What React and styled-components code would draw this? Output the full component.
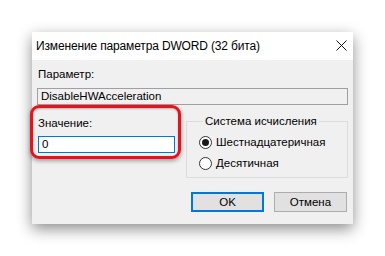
import React from 'react';
import styled, { createGlobalStyle } from 'styled-components';

const Global = createGlobalStyle`
	html, body {
		margin: 0;
		background: #fff;
	}
	body {
		font-family: "Liberation Sans", "Noto Sans", sans-serif;
		font-size: 11.5px;
		color: #000;
	}
`;

const Page = styled.div`
	padding: 32px 0 0 32px;
	height: 256px;
	box-sizing: border-box;
`;

const Dialog = styled.div`
	width: 321px;
	height: 192px;
	background: #f0f0f0;
	box-shadow: 0 5px 14px rgba(0, 0, 0, 0.45);
	display: flex;
	flex-direction: column;
`;

const TitleBar = styled.div`
	height: 28px;
	background: #fff;
	display: flex;
	align-items: center;
	justify-content: space-between;
	padding: 0 6px 0 4px;
	font-size: 12px;
	letter-spacing: -0.15px;
`;

const Close = styled.svg`
	width: 11px;
	height: 11px;
	margin-top: -2px;
`;

const Body = styled.div`
	padding: 7px 5px 0 5px;
	display: flex;
	flex-direction: column;
`;

const Label = styled.div`
	line-height: 15px;
	padding-left: ${p => p.indent || 0}px;
`;

const Field = styled.div`
	height: 17px;
	box-sizing: border-box;
	margin-top: ${p => p.gap || 6}px;
	border: 1px solid ${p => (p.focused ? '#0078d7' : '#a0a0a0')};
	background: ${p => (p.focused ? '#fff' : '#f0f0f0')};
	padding-left: 3px;
	line-height: 15px;
	width: ${p => (p.width ? `${p.width}px` : 'auto')};
`;

const Row = styled.div`
	display: flex;
	justify-content: space-between;
	align-items: flex-start;
	margin-top: 9px;
`;

const ValueBlock = styled.div`
	position: relative;
	padding-top: 2px;
	padding-left: 1px;

	&::after {
		content: '';
		position: absolute;
		left: -7px;
		top: -9px;
		width: 145px;
		height: 48px;
		border: 3px solid #e8121b;
		border-radius: 9px;
		box-shadow: 0 2px 4px rgba(0, 0, 0, 0.35), inset 0 1px 2px rgba(0, 0, 0, 0.25);
		pointer-events: none;
	}
`;

const Group = styled.fieldset`
	margin: 0;
	width: 162px;
	height: 64px;
	box-sizing: border-box;
	border: 1px solid #dcdcdc;
	padding: 5px 0 0 12px;
	display: flex;
	flex-direction: column;
	gap: 5px;
`;

const Legend = styled.legend`
	padding: 0 2px;
	margin-left: 4px;
	line-height: 15px;
`;

const Radio = styled.label`
	display: flex;
	align-items: center;
	gap: 4px;
	line-height: 16px;
`;

const Circle = styled.span`
	width: 13px;
	height: 13px;
	box-sizing: border-box;
	border-radius: 50%;
	border: 1px solid #333;
	background: #fff;
	display: flex;
	align-items: center;
	justify-content: center;

	&::after {
		content: '';
		width: 7px;
		height: 7px;
		border-radius: 50%;
		background: ${p => (p.checked ? '#1a1a1a' : 'transparent')};
	}
`;

const Buttons = styled.div`
	display: flex;
	justify-content: flex-end;
	gap: 10px;
	margin-top: 14px;
	padding-right: 1px;
`;

const Button = styled.div`
	width: 73px;
	height: 20px;
	box-sizing: border-box;
	background: #e1e1e1;
	border: ${p => (p.primary ? '2px solid #0078d7' : '1px solid #adadad')};
	display: flex;
	align-items: center;
	justify-content: center;
`;

export default function App() {
	return (
		<Page>
			<Global />
			<Dialog>
				<TitleBar>
					<span>Изменение параметра DWORD (32 бита)</span>
					<Close viewBox="0 0 11 11">
						<path d="M0.5 0.5 L10.5 10.5 M10.5 0.5 L0.5 10.5" stroke="#111" strokeWidth="1" fill="none" />
					</Close>
				</TitleBar>
				<Body>
					<Label indent={1}>Параметр:</Label>
					<Field>DisableHWAcceleration</Field>
					<Row>
						<ValueBlock>
							<Label>Значение:</Label>
							<Field focused width={137} gap={5}>0</Field>
						</ValueBlock>
						<Group>
							<Legend>Система исчисления</Legend>
							<Radio><Circle checked />Шестнадцатеричная</Radio>
							<Radio><Circle />Десятичная</Radio>
						</Group>
					</Row>
					<Buttons>
						<Button primary>OK</Button>
						<Button>Отмена</Button>
					</Buttons>
				</Body>
			</Dialog>
		</Page>
	);
}
